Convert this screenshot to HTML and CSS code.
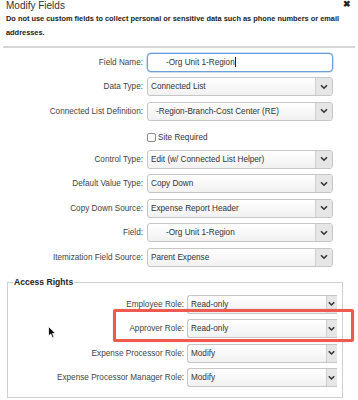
FILE: index.html
```html
<!DOCTYPE html>
<html>
<head>
<meta charset="utf-8">
<link rel="stylesheet" href="styles.css">
</head>
<body>
<div class="dialog">
  <div class="title-bar">
    <h1 class="title">Modify Fields</h1>
    <span class="close">✖</span>
  </div>
  <p class="warning">Do not use custom fields to collect personal or sensitive data such as phone numbers or email addresses.</p>
  <div class="sep"></div>

  <div class="form main-form">
    <label class="lbl">Field Name:</label>
    <div class="input focus"><span class="val pad-l">-Org Unit 1-Region</span><span class="caret"></span></div>

    <label class="lbl">Data Type:</label>
    <div class="select"><span class="val">Connected List</span><span class="arrow"><svg width="8" height="6" viewBox="0 0 8 6"><path d="M1 1.2 L4 4.2 L7 1.2" fill="none" stroke="#333" stroke-width="1.6"/></svg></span></div>

    <label class="lbl">Connected List Definition:</label>
    <div class="select"><span class="val pad-s">-Region-Branch-Cost Center (RE)</span><span class="arrow"><svg width="8" height="6" viewBox="0 0 8 6"><path d="M1 1.2 L4 4.2 L7 1.2" fill="none" stroke="#333" stroke-width="1.6"/></svg></span></div>

    <span class="lbl"></span>
    <div class="check-row"><span class="checkbox"></span><span class="check-label">Site Required</span></div>

    <label class="lbl">Control Type:</label>
    <div class="select"><span class="val">Edit (w/ Connected List Helper)</span><span class="arrow"><svg width="8" height="6" viewBox="0 0 8 6"><path d="M1 1.2 L4 4.2 L7 1.2" fill="none" stroke="#333" stroke-width="1.6"/></svg></span></div>

    <label class="lbl">Default Value Type:</label>
    <div class="select"><span class="val">Copy Down</span><span class="arrow"><svg width="8" height="6" viewBox="0 0 8 6"><path d="M1 1.2 L4 4.2 L7 1.2" fill="none" stroke="#333" stroke-width="1.6"/></svg></span></div>

    <label class="lbl">Copy Down Source:</label>
    <div class="select"><span class="val">Expense Report Header</span><span class="arrow"><svg width="8" height="6" viewBox="0 0 8 6"><path d="M1 1.2 L4 4.2 L7 1.2" fill="none" stroke="#333" stroke-width="1.6"/></svg></span></div>

    <label class="lbl">Field:</label>
    <div class="select"><span class="val pad-l">-Org Unit 1-Region</span><span class="arrow"><svg width="8" height="6" viewBox="0 0 8 6"><path d="M1 1.2 L4 4.2 L7 1.2" fill="none" stroke="#333" stroke-width="1.6"/></svg></span></div>

    <label class="lbl">Itemization Field Source:</label>
    <div class="select"><span class="val">Parent Expense</span><span class="arrow"><svg width="8" height="6" viewBox="0 0 8 6"><path d="M1 1.2 L4 4.2 L7 1.2" fill="none" stroke="#333" stroke-width="1.6"/></svg></span></div>
  </div>

  <fieldset class="rights">
    <legend class="legend">Access Rights</legend>
    <div class="form rights-form">
      <label class="lbl">Employee Role:</label>
      <div class="select clip"><span class="val">Read-only</span><span class="arrow"><svg width="7" height="6" viewBox="0 0 7 6"><path d="M0.8 1.2 L3.5 4 L6.2 1.2" fill="none" stroke="#333" stroke-width="1.5"/></svg></span></div>

      <label class="lbl">Approver Role:</label>
      <div class="select clip"><span class="val">Read-only</span><span class="arrow"><svg width="7" height="6" viewBox="0 0 7 6"><path d="M0.8 1.2 L3.5 4 L6.2 1.2" fill="none" stroke="#333" stroke-width="1.5"/></svg></span></div>

      <label class="lbl">Expense Processor Role:</label>
      <div class="select clip"><span class="val">Modify</span><span class="arrow"><svg width="7" height="6" viewBox="0 0 7 6"><path d="M0.8 1.2 L3.5 4 L6.2 1.2" fill="none" stroke="#333" stroke-width="1.5"/></svg></span></div>

      <label class="lbl">Expense Processor Manager Role:</label>
      <div class="select clip"><span class="val">Modify</span><span class="arrow"><svg width="7" height="6" viewBox="0 0 7 6"><path d="M0.8 1.2 L3.5 4 L6.2 1.2" fill="none" stroke="#333" stroke-width="1.5"/></svg></span></div>
    </div>
  </fieldset>

  <div class="highlight"></div>
  <svg class="pointer" width="9" height="13" viewBox="0 0 9 13"><path d="M0.5 0.5 L0.5 10 L2.8 8 L4.4 11.8 L6 11.1 L4.5 7.5 L7.6 7.5 Z" fill="#111" stroke="#fff" stroke-width="0.8"/></svg>
</div>
</body>
</html>
```

FILE: styles.css
```css
html, body {
  margin: 0;
  padding: 0;
  background: #fff;
}
body {
  width: 358px;
  height: 400px;
  overflow: hidden;
  font-family: "Liberation Sans", Arial, Helvetica, sans-serif;
  color: #333;
}
.dialog {
  position: relative;
  padding: 0 6px;
}
.title-bar {
  display: flex;
  justify-content: space-between;
  align-items: center;
  height: 12px;
}
.title {
  margin: 0;
  font-size: 10px;
  font-weight: normal;
  line-height: 12px;
  color: #333;
}
.close {
  font-size: 9px;
  font-weight: bold;
  color: #222;
  line-height: 8px;
  margin-top: -4px;
  margin-right: 1px;
}
.warning {
  margin: 0;
  font-size: 7.4px;
  font-weight: bold;
  line-height: 14px;
  color: #222;
}
.sep {
  height: 2px;
  background: #d6d6d6;
  margin: 6px -3px 0 -3px;
}
.form {
  display: grid;
  row-gap: 5.5px;
  align-items: center;
}
.main-form {
  margin-top: 4.5px;
  grid-template-columns: 137px 186px;
  column-gap: 4px;
}
.lbl {
  text-align: right;
  font-size: 8.2px;
  color: #444;
  white-space: nowrap;
}
.select, .input {
  box-sizing: border-box;
  height: 19px;
  display: flex;
  align-items: center;
  border: 1px solid #c6c6c6;
  border-radius: 3px;
  background: linear-gradient(#ffffff, #f1f1f1);
  overflow: hidden;
}
.val {
  flex: 1;
  padding-left: 3px;
  font-size: 8.2px;
  color: #333;
  white-space: nowrap;
}
.pad-l { padding-left: 18px; }
.pad-s { padding-left: 8px; }
.arrow {
  width: 16px;
  height: 100%;
  display: flex;
  align-items: center;
  justify-content: center;
  background: #e6e6e6;
  border-left: 1px solid #cfcfcf;
}
.input {
  background: #fff;
  border: 1px solid #6e9fdc;
  border-radius: 4px;
  box-shadow: 0 0 0 0.5px #9bbde8;
}
.input .val {
  flex: 0 0 auto;
}
.caret {
  width: 1px;
  height: 10px;
  background: #222;
}
.check-row {
  box-sizing: border-box;
  height: 18px;
  padding-top: 4px;
  display: flex;
  align-items: center;
  gap: 2px;
}
.checkbox {
  box-sizing: border-box;
  width: 9px;
  height: 9px;
  border: 1px solid #8c8c8c;
  border-radius: 2px;
  background: #fff;
}
.check-label {
  font-size: 8.2px;
  color: #333;
}
.rights {
  margin: 10.5px 0 0 1px;
  width: 336px;
  box-sizing: border-box;
  border: 1px solid #cfcfcf;
  padding: 7.5px 0 10px 0;
  min-width: 0;
}
.legend {
  font-size: 8.6px;
  font-weight: bold;
  line-height: 10px;
  color: #222;
  padding: 0 1px;
  margin-left: 5px;
}
.rights-form {
  grid-template-columns: 176px 150px;
  column-gap: 3px;
}
.select.clip {
  border-right: none;
  border-top-right-radius: 0;
  border-bottom-right-radius: 0;
}
.select.clip .arrow {
  width: 11px;
  justify-content: flex-start;
  padding-left: 1px;
  box-sizing: border-box;
}
.highlight {
  position: absolute;
  left: 113px;
  top: 309px;
  width: 241px;
  height: 33px;
  box-sizing: border-box;
  border: 3px solid #ee5a4f;
  border-radius: 2px;
  box-shadow: 0 0 2px rgba(0,0,0,0.15);
}
.pointer {
  position: absolute;
  left: 48px;
  top: 326px;
}
```
